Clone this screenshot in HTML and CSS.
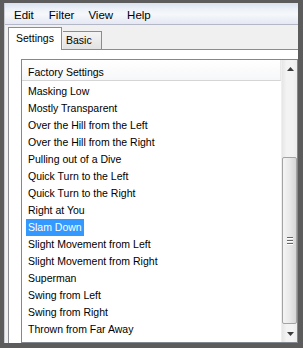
FILE: index.html
```html
<!DOCTYPE html>
<html>
<head>
<meta charset="utf-8">
<link rel="stylesheet" href="styles.css">
</head>
<body>
<div class="window">
  <div class="menubar">
    <span class="menu-item">Edit</span>
    <span class="menu-item">Filter</span>
    <span class="menu-item">View</span>
    <span class="menu-item">Help</span>
  </div>
  <div class="tabstrip">
    <div class="tab tab-active">Settings</div>
    <div class="tab tab-inactive">Basic</div>
  </div>
  <div class="panel">
    <div class="listbox">
      <div class="list-content">
        <div class="list-header">Factory Settings</div>
        <div class="list-rows">
          <div class="row"><span class="label">Masking Low</span></div>
          <div class="row"><span class="label">Mostly Transparent</span></div>
          <div class="row"><span class="label">Over the Hill from the Left</span></div>
          <div class="row"><span class="label">Over the Hill from the Right</span></div>
          <div class="row"><span class="label">Pulling out of a Dive</span></div>
          <div class="row"><span class="label">Quick Turn to the Left</span></div>
          <div class="row"><span class="label">Quick Turn to the Right</span></div>
          <div class="row"><span class="label">Right at You</span></div>
          <div class="row"><span class="label selected">Slam Down</span></div>
          <div class="row"><span class="label">Slight Movement from Left</span></div>
          <div class="row"><span class="label">Slight Movement from Right</span></div>
          <div class="row"><span class="label">Superman</span></div>
          <div class="row"><span class="label">Swing from Left</span></div>
          <div class="row"><span class="label">Swing from Right</span></div>
          <div class="row"><span class="label">Thrown from Far Away</span></div>
        </div>
      </div>
      <div class="scrollbar">
        <div class="sb-btn">
          <svg width="7" height="4" viewBox="0 0 7 4"><polygon points="3.5,0 7,4 0,4" fill="#3c3c3c"/></svg>
        </div>
        <div class="sb-thumb">
          <div class="grip"><i></i><i></i><i></i></div>
        </div>
        <div class="sb-btn sb-down">
          <svg width="7" height="4" viewBox="0 0 7 4"><polygon points="0,0 7,0 3.5,4" fill="#3c3c3c"/></svg>
        </div>
      </div>
    </div>
  </div>
</div>
</body>
</html>
```
FILE: styles.css
```css
html, body {
  margin: 0;
  padding: 0;
}
body {
  width: 303px;
  height: 348px;
  overflow: hidden;
  background: #5c5c5c;
  box-sizing: border-box;
  padding: 3px 5px 5px 4px;
  font-family: "Liberation Sans", Arial, sans-serif;
  color: #000;
}
.window {
  width: 294px;
  height: 340px;
  box-sizing: border-box;
  border-left: 1px solid #c9ccd3;
  background: #f0f0f0;
  overflow: hidden;
  display: flex;
  flex-direction: column;
}
.menubar {
  height: 21px;
  box-sizing: content-box;
  border-bottom: 1px solid #b4b8c6;
  background: linear-gradient(#d9e2ef 0%, #eef2f8 30%, #f5f7fb 55%, #e5e8f4 100%);
  display: flex;
  padding: 0 0 0 3px;
}
.menu-item {
  font-size: 11.5px;
  padding: 4px 7px 0 6px;
  line-height: 17px;
}
.menu-item + .menu-item {
  padding-left: 8px;
  padding-right: 6px;
}
.tabstrip {
  display: flex;
  align-items: flex-end;
  padding: 2px 0 0 3px;
  position: relative;
  z-index: 1;
}
.tab {
  font-size: 10.5px;
  box-sizing: border-box;
  border: 1px solid #898c95;
  margin-bottom: -1px;
}
.tab-active {
  width: 54px;
  height: 23px;
  border-bottom: none;
  background: #fff;
  padding: 2px 0 0 7px;
  line-height: 17px;
}
.tab-inactive {
  width: 39px;
  height: 19px;
  border-left: none;
  margin-left: 1px;
  background: linear-gradient(#f4f4f4, #e2e2e2);
  padding: 0 0 0 3px;
  line-height: 16px;
}
.panel {
  flex: 1;
  background: #fff;
  border-top: 1px solid #898c95;
  border-left: 1px solid #898c95;
  margin-left: 3px;
  padding: 9px 0 0 12px;
  min-height: 0;
}
.listbox {
  width: 277px;
  height: 284px;
  box-sizing: border-box;
  border: 1px solid #828790;
  display: flex;
  overflow: hidden;
}
.list-content {
  flex: 1;
  min-width: 0;
  font-size: 10.5px;
}
.list-header {
  height: 21px;
  box-sizing: border-box;
  padding: 4px 0 0 6px;
  line-height: 17px;
  background: linear-gradient(#ffffff, #f6f7f9);
  border-bottom: 1px solid #d5d5d5;
  border-right: 1px solid #e8e8e8;
}
.list-rows {
  padding-top: 2px;
}
.row {
  height: 17px;
  line-height: 17px;
  padding-left: 4px;
  white-space: nowrap;
}
.label {
  display: inline-block;
  padding: 0 2px;
}
.label.selected {
  background: #3399ff;
  color: #fff;
}
.scrollbar {
  width: 16px;
  display: flex;
  flex-direction: column;
  background: linear-gradient(to right, #e6e6e6, #f3f3f3 30%, #f3f3f3 70%, #ececec);
  border-left: 1px solid #efefef;
  box-sizing: border-box;
}
.sb-btn {
  height: 17px;
  display: flex;
  align-items: center;
  justify-content: center;
  padding-left: 1px;
}
.sb-thumb {
  margin: 80px 0 0 0;
  height: 167px;
  box-sizing: border-box;
  border: 1px solid #a3a3a3;
  border-radius: 2px;
  background: linear-gradient(to right, #f4f4f4, #e9e9e9 50%, #d6d6d6);
  display: flex;
  align-items: center;
  justify-content: center;
}
.grip {
  display: flex;
  flex-direction: column;
  gap: 1px;
  margin-top: 1px;
}
.grip i {
  display: block;
  width: 6px;
  height: 1px;
  background: #666;
  border-bottom: 1px solid #fff;
}
.sb-down {
  margin-top: auto;
}
```
